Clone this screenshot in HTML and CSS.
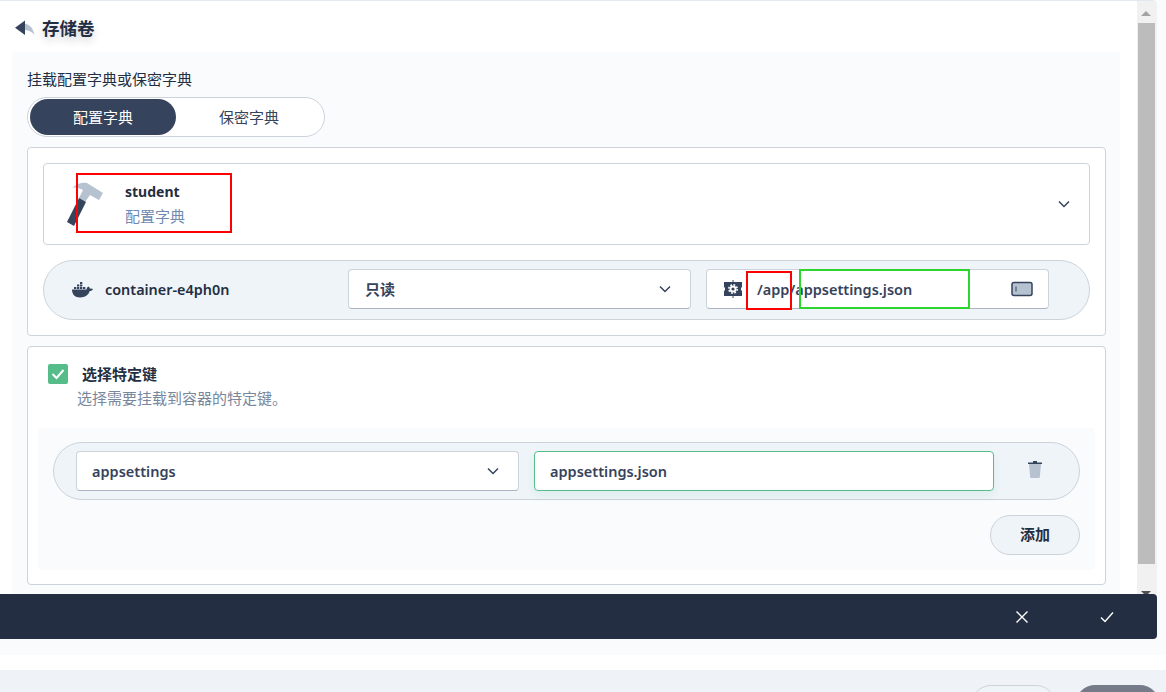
FILE: index.html
```html
<!DOCTYPE html>
<html lang="zh">
<head>
<meta charset="utf-8">
<title>存储卷</title>
<link rel="stylesheet" href="styles.css">
</head>
<body>
<div class="upper">
  <div class="panel">
    <div class="content">
      <header class="title-row">
        <svg class="back-icon" width="20" height="16" viewBox="0 0 20 16"><path class="duo-light" d="M8 3.500c6 0 10 4 11.500 11.500-2.500-3.500-6-5-11.500-5z"/><path class="duo-dark" d="M10 0.500v14.500L0 7.800z"/></svg>
        <h1 class="title">存储卷</h1>
      </header>
      <section class="body-box">
        <div class="label">挂载配置字典或保密字典</div>
        <div class="toggle">
          <div class="toggle-item toggle-active">配置字典</div>
          <div class="toggle-item">保密字典</div>
        </div>
        <div class="card card-one">
          <div class="resource">
            <svg class="hammer" width="40" height="50" viewBox="0 0 40 50"><path class="duo-light" d="M5 8C10 3 16 2 20 3l16 10-4 7-9-5-5 7-6-4 4-8C12 8 9 7 5 8z"/><path class="duo-dark" d="M12 18l7 4L7 46l-7-4z"/></svg>
            <div class="resource-text">
              <div class="resource-name">student</div>
              <div class="resource-type">配置字典</div>
            </div>
            <svg class="chevron chevron-end" width="14" height="14" viewBox="0 0 14 14"><path d="M2 4.500l5 5 5-5"/></svg>
            <span class="mark mark-red mark-student"></span>
          </div>
          <div class="pill-row container-row">
            <svg class="docker" width="22" height="16" viewBox="0 0 22 16"><path class="duo-dark" d="M1 7.500h14.500c.3-1.600.9-2.500 2-3 .8.600 1.300 1.300 1.500 2.200 1-.3 2-.2 3 .4-.7 1.400-1.800 2-3.300 2C17.500 13 14 15.500 9 15.500c-5 0-8-3-8-8z"/><path class="duo-dark" d="M3 5h2.300v2H3zM6 5h2.300v2H6zM9 5h2.300v2H9zM12 5h2.300v2H12zM6 2.500h2.300v2H6zM9 2.500h2.300v2H9zM9 0h2.300v2H9z"/></svg>
            <div class="container-name">container-e4ph0n</div>
            <div class="field select-mode">
              <span class="field-text field-cjk">只读</span>
              <svg class="chevron" width="14" height="14" viewBox="0 0 14 14"><path d="M2 4.500l5 5 5-5"/></svg>
            </div>
            <div class="field field-path">
              <svg class="mount-icon" width="20" height="18" viewBox="0 0 20 18"><path class="duo-dark" d="M1 2h18v5l-1 1v2l1 1v5H1v-5l1-1V8L1 7zM9.500 0h1v2h-1zM9.500 16h1v2h-1z"/><circle class="gear-teeth" cx="10" cy="9" r="4.200"/><circle class="gear-body" cx="10" cy="9" r="3.500"/><circle class="duo-dark" cx="10" cy="9" r="1.600"/></svg>
              <span class="field-text path-text">/app/appsettings.json</span>
              <svg class="toggle-icon" width="22" height="16" viewBox="0 0 22 16"><rect class="duo-light" x="1" y="1.500" width="20" height="13" rx="2"/><rect class="outline-dark" x="1" y="1.500" width="20" height="13" rx="2"/><path class="outline-thin" d="M5 5.500v5"/></svg>
              <span class="mark mark-red mark-app"></span>
              <span class="mark mark-green mark-file"></span>
            </div>
          </div>
        </div>
        <div class="card card-two">
          <div class="check-row">
            <span class="checkbox"><svg width="14" height="12" viewBox="0 0 14 12"><path d="M1.500 6l4 4 7-8"/></svg></span>
            <span class="check-label">选择特定键</span>
          </div>
          <div class="check-desc">选择需要挂载到容器的特定键。</div>
          <div class="keys-box">
            <div class="pill-row key-row">
              <div class="field select-key">
                <span class="field-text">appsettings</span>
                <svg class="chevron" width="14" height="14" viewBox="0 0 14 14"><path d="M2 4.500l5 5 5-5"/></svg>
              </div>
              <div class="field input-key"><span class="field-text">appsettings.json</span></div>
              <svg class="trash" width="16" height="18" viewBox="0 0 16 18"><path class="duo-light" d="M2 4h12l-1.200 13c0 .5-.4 1-1 1H4.200c-.6 0-1-.5-1-1z"/><path class="duo-dark" d="M1 2.500h5V1h4v1.500h5V4H1z"/></svg>
            </div>
            <div class="add-line"><button class="pill-btn" type="button">添加</button></div>
          </div>
        </div>
      </section>
    </div>
    <div class="scrollbar">
      <span class="scroll-up"></span>
      <span class="scroll-thumb"></span>
      <span class="scroll-down"></span>
    </div>
  </div>
  <div class="action-bar">
    <svg class="bar-icon bar-close" width="14" height="14" viewBox="0 0 14 14"><path d="M1.500 1.500l11 11M12.500 1.500l-11 11"/></svg>
    <svg class="bar-icon bar-ok" width="16" height="14" viewBox="0 0 16 14"><path d="M2 7.500l4 4 8-9"/></svg>
  </div>
</div>
<footer class="footer">
  <button class="foot-btn foot-cancel" type="button" aria-label="取消"></button>
  <button class="foot-btn foot-ok" type="button" aria-label="确定"></button>
</footer>
</body>
</html>
```
FILE: styles.css
```css
* { box-sizing: border-box; }
html, body { margin: 0; padding: 0; }
body {
  width: 1166px;
  height: 692px;
  overflow: hidden;
  background: #fff;
  color: #242e42;
  font-family: "Noto Sans", "Noto Sans CJK SC", sans-serif;
  font-size: 15px;
}
.duo-dark { fill: #36435c; }
.duo-light { fill: #b6c2cf; }
.upper { height: 655px; background: #f9fbfd; }
.panel {
  width: 1157px;
  height: 594px;
  display: flex;
  background: #fff;
  border-top: 1px solid #e3e9ef;
  border-top-right-radius: 5px;
  overflow: hidden;
}
.content { width: 1137px; padding: 0 17px 0 12px; }
.title-row { height: 51px; display: flex; align-items: center; gap: 7px; padding: 3px 0 0 3px; }
.title { margin: 0; font-size: 17.500px; font-weight: 700; line-height: 24px; text-shadow: 0 4px 8px rgba(36, 46, 66, .2); }
.body-box { height: 560px; background: #f9fbfd; border-radius: 4px; padding: 17px 14px 0 15px; }
.label { height: 20px; line-height: 20px; margin-bottom: 8px; }
.toggle {
  width: 298px;
  height: 40px;
  padding: 1px 2px;
  display: flex;
  border: 1px solid #ccd3db;
  border-radius: 20px;
  background: #fff;
  color: #36435c;
  margin-bottom: 10px;
}
.toggle-item { width: 146px; display: flex; align-items: center; justify-content: center; border-radius: 18px; padding-bottom: 2px; }
.toggle-active { background: #36435c; color: #fff; }
.card { background: #fff; border: 1px solid #ccd3db; border-radius: 4px; }
.card-one { height: 189px; padding: 15px; margin-bottom: 10px; }
.card-two { height: 239px; padding: 17px 10px 0; }
.resource {
  position: relative;
  height: 82px;
  display: flex;
  align-items: center;
  padding: 0 18px 0 23px;
  border: 1px solid #ccd3db;
  border-radius: 4px;
  margin-bottom: 15px;
}
.hammer { flex: none; margin-right: 18px; margin-top: 1px; }
.resource-name { font-size: 14px; font-weight: 700; line-height: 20px; margin-bottom: 4px; }
.resource-type { color: #7089b0; line-height: 20px; }
.chevron path { fill: none; stroke: #36435c; stroke-width: 1.500; }
.chevron { flex: none; }
.chevron-end { margin-left: auto; }
.pill-row { background: #eff4f9; border: 1px solid #ccd3db; display: flex; align-items: center; }
.container-row { height: 60px; border-radius: 30px; padding: 0 40px 2px 27px; }
.docker { flex: none; margin-right: 12px; margin-top: 2px; }
.container-name { width: 243px; font-size: 14.400px; font-weight: 600; }
.field {
  position: relative;
  height: 40px;
  display: flex;
  align-items: center;
  background: #fff;
  border: 1px solid #ccd3db;
  border-bottom-color: #abb4c0;
  border-radius: 4px;
  padding: 0 18px 0 15px;
}
.field-text { font-size: 14.500px; font-weight: 600; color: #36435c; }
.field-cjk { font-size: 15px; margin: -2px 0 0 1px; }
.select-mode { width: 343px; justify-content: space-between; margin-right: 15px; }
.field-path { width: 343px; padding: 0 15px 0 16px; }
.mount-icon { flex: none; margin-right: 14px; }
.path-text { flex: 1; }
.toggle-icon { flex: none; }
.gear-teeth { fill: none; stroke: #fff; stroke-width: 1.500; stroke-dasharray: 1.800 1.500; }
.gear-body { fill: #fff; }
.outline-dark { fill: none; stroke: #36435c; stroke-width: 1.500; }
.outline-thin { fill: none; stroke: #36435c; stroke-width: 1; }
.mark { position: absolute; pointer-events: none; border: 2px solid; }
.mark-red { border-color: #f00; }
.mark-green { border-color: #2fd42f; }
.mark-student { left: 32px; top: 9px; width: 156px; height: 60px; }
.mark-app { left: 39px; top: 1px; width: 46px; height: 39px; }
.mark-file { left: 92px; top: -1px; width: 171px; height: 40px; }
.check-row { height: 20px; display: flex; align-items: center; padding-left: 10px; margin-bottom: 4px; }
.checkbox {
  width: 20px;
  height: 20px;
  border-radius: 2px;
  background: #55bc8a;
  display: flex;
  align-items: center;
  justify-content: center;
  margin-right: 14px;
}
.checkbox path { fill: none; stroke: #fff; stroke-width: 2; }
.check-label { font-weight: 600; color: #242e42; margin-top: -1px; }
.check-desc { color: #79879c; line-height: 20px; padding-left: 39px; margin-bottom: 20px; }
.keys-box { height: 142px; background: #f9fbfd; border-radius: 4px; padding: 14px 15px; }
.key-row { height: 58px; border-radius: 29px; padding: 0 0 0 22px; margin-bottom: 15px; }
.select-key { width: 443px; justify-content: space-between; margin-right: 15px; }
.input-key { width: 460px; border-color: #55bc8a; box-shadow: 0 4px 8px rgba(85, 188, 138, .12); margin-right: 33px; }
.trash { flex: none; margin-bottom: 4px; }
.add-line { display: flex; justify-content: flex-end; }
.pill-btn {
  width: 90px;
  height: 40px;
  background: #eff4f9;
  border: 1px solid #ccd3db;
  border-radius: 20px;
  color: #242e42;
  font: 600 15px "Noto Sans", "Noto Sans CJK SC", sans-serif;
  padding: 0 0 3px;
}
.scrollbar { width: 20px; background: #f1f1f1; display: flex; flex-direction: column; align-items: center; padding: 10px 2px 0 0; }
.scroll-up, .scroll-down { width: 0; height: 0; border-left: 5px solid transparent; border-right: 5px solid transparent; flex: none; }
.scroll-up { border-bottom: 5px solid #a3a3a3; margin-bottom: 7px; }
.scroll-thumb { width: 17px; height: 541px; background: #bcbcbc; flex: none; }
.scroll-down { border-top: 5px solid #505050; margin-top: 27px; }
.action-bar {
  width: 1157px;
  height: 45px;
  background: #242e42;
  border-radius: 0 4px 4px 0;
  display: flex;
  align-items: center;
  justify-content: flex-end;
  padding-right: 42px;
}
.bar-icon path { fill: none; stroke: #fff; stroke-width: 1.400; }
.bar-close { margin-right: 70px; }
.footer {
  height: 22px;
  margin-top: 15px;
  background: #eff3f7;
  overflow: hidden;
  display: flex;
  justify-content: flex-end;
  align-items: flex-start;
  gap: 19px;
  padding: 15px 6px 0 0;
}
.foot-btn {
  flex: none;
  width: 85px;
  height: 40px;
  border-radius: 20px;
  border: 1px solid #ccd3db;
}
.foot-cancel { background: #eff4f9; }
.foot-ok { background: #767b89; border-color: #767b89; }
```
